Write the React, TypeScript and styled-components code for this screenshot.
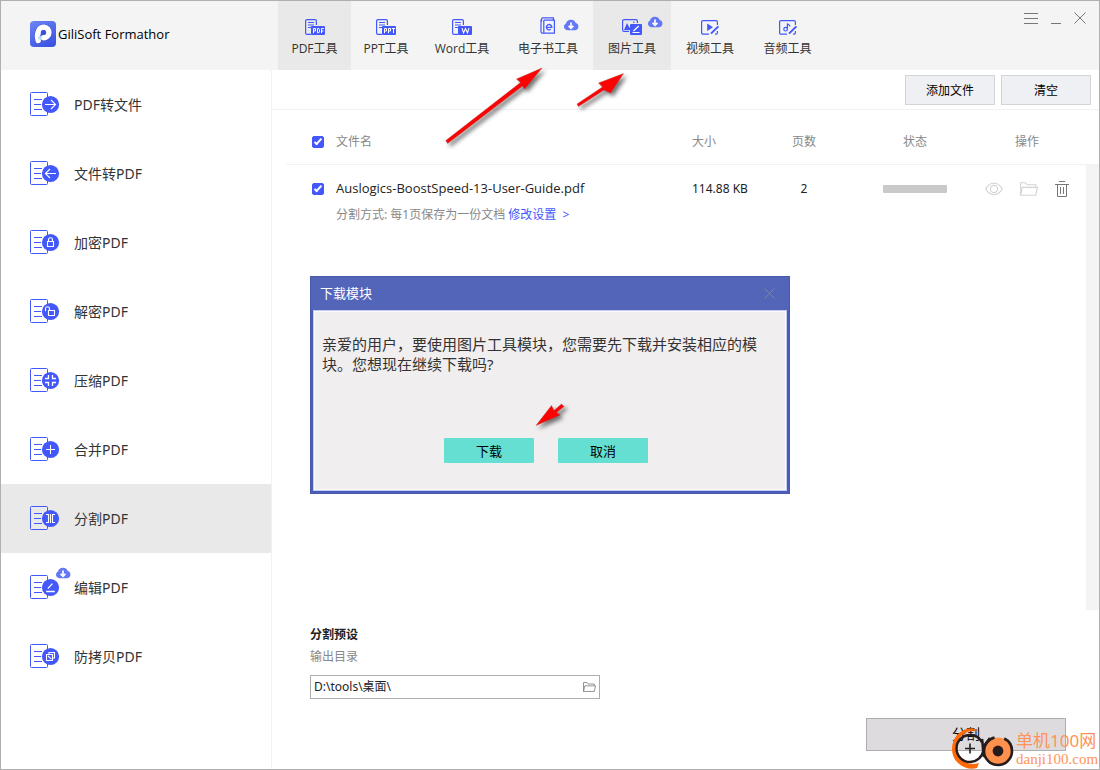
import React from "react";
import styled, { createGlobalStyle, css } from "styled-components";

const BLUE = "#4358fa";
const FONT = `"Noto Sans", "Noto Sans CJK SC", sans-serif`;
const LATIN = `"Open Sans", "Noto Sans CJK SC", sans-serif`;

const GlobalStyle = createGlobalStyle`
  *, *::before, *::after { box-sizing: border-box; }
  body { margin: 0; background: #fff; font-family: ${FONT}; font-size: 12px; color: #222; }
  button, input { font: inherit; color: inherit; }
  button { padding: 0; border: 0; background: none; cursor: pointer; }
  svg { display: block; }
`;

const Window = styled.div`
  position: relative;
  display: flex;
  flex-direction: column;
  min-height: 100vh;
  border: 1px solid #b0b0b0;
  overflow: hidden;
`;

/* ---------- header ---------- */

const Header = styled.header`
  display: flex;
  height: 69px;
  background: #f4f4f4;
`;

const Brand = styled.div`
  display: flex;
  align-items: center;
  gap: 2px;
  width: 277px;
  padding: 0 0 3px 29px;
  font-family: ${LATIN};
  font-size: 13px;
  color: #000;
  white-space: nowrap;
`;

const Tabs = styled.nav`
  display: flex;
  flex: 1;
`;

const Tab = styled.button<{ $width: number; $active?: boolean }>`
  display: flex;
  flex-direction: column;
  align-items: center;
  gap: 5px;
  width: ${(p) => p.$width}px;
  padding-top: 16px;
  font-family: ${LATIN};
  line-height: 18px;
  color: #333;
  white-space: nowrap;
  background: ${(p) => (p.$active ? "#e9e9e9" : "transparent")};
`;

const IconBox = styled.span`
  position: relative;
  display: block;
`;

const Badge = styled.span<{ $left: number; $top: number }>`
  position: absolute;
  left: ${(p) => p.$left}px;
  top: ${(p) => p.$top}px;
`;

const WindowControls = styled.div`
  display: flex;
  align-items: flex-start;
  gap: 13px;
  padding: 11px 13px 0 0;
`;

/* ---------- body ---------- */

const Body = styled.div`
  display: flex;
  flex: 1;
`;

const Sidebar = styled.nav`
  width: 271px;
  border-right: 1px solid #f2f2f2;
`;

const SideItem = styled.button<{ $active?: boolean }>`
  display: flex;
  align-items: center;
  gap: 14px;
  width: 100%;
  height: 69px;
  padding: 0 0 2px 29px;
  font-size: 14px;
  color: #333;
  background: ${(p) => (p.$active ? "#e9e9e9" : "transparent")};
`;

const Main = styled.main`
  display: flex;
  flex: 1;
  flex-direction: column;
  min-width: 0;
`;

const Toolbar = styled.div`
  display: flex;
  justify-content: flex-end;
  gap: 6px;
  height: 40px;
  padding: 5px 8px 0 0;
  border-bottom: 1px solid #f2f2f2;
`;

const ToolButton = styled.button`
  width: 90px;
  height: 30px;
  border: 1px solid #d2d3d6;
  background: #eff0f3;
  color: #000;
`;

const ListArea = styled.section`
  display: flex;
  flex: 1;
  align-items: stretch;
  padding-left: 14px;
`;

const FileTable = styled.table`
  flex: 1;
  align-self: flex-start;
  width: 100%;
  table-layout: fixed;
  border-collapse: separate;
  border-spacing: 0;
  white-space: nowrap;
`;

const Th = styled.th<{ $align?: string }>`
  height: 55px;
  padding: 9px 0 0;
  border-bottom: 1px solid #f2f2f2;
  font-weight: 400;
  line-height: 18px;
  text-align: ${(p) => p.$align ?? "left"};
  vertical-align: middle;
  color: #888;
`;

const Td = styled.td<{ $align?: string }>`
  height: 41px;
  padding: 6px 0 0;
  line-height: 20px;
  text-align: ${(p) => p.$align ?? "left"};
  vertical-align: middle;
`;

const NoteCell = styled.td`
  padding: 0 0 10px;
  line-height: 18px;
  vertical-align: top;
  color: #888;
`;

const FileName = styled.span`
  font-family: ${LATIN};
  font-size: 13px;
`;

const SettingsLink = styled.a`
  color: ${BLUE};
  text-decoration: none;
`;

const CheckBox = styled.input.attrs({ type: "checkbox" })`
  position: relative;
  display: block;
  appearance: none;
  width: 12px;
  height: 12px;
  margin: 0 0 0 26px;
  border-radius: 2px;
  border: 1px solid ${BLUE};
  background: #fff;

  &:checked {
    background: ${BLUE};
  }

  &:checked::after {
    content: "";
    position: absolute;
    left: 3px;
    top: 0;
    width: 4px;
    height: 8px;
    border: solid #fff;
    border-width: 0 2px 2px 0;
    transform: rotate(42deg);
  }
`;

const StatusBar = styled.span`
  display: block;
  width: 64px;
  height: 8px;
  margin: 0 auto;
  border-radius: 1px;
  background: #c9c9c9;
`;

const RowActions = styled.div`
  display: flex;
  align-items: center;
  justify-content: center;
  gap: 17px;
`;

const Rail = styled.div`
  display: flex;
  flex-direction: column;
  width: 13px;

  &::before {
    content: "";
    height: 55px;
    border-bottom: 1px solid #f2f2f2;
  }

  &::after {
    content: "";
    flex: 1;
    background: #f4f4f4;
  }
`;

const Footer = styled.footer`
  display: flex;
  align-items: flex-end;
  justify-content: space-between;
  padding: 15px 33px 18px 38px;
`;

const Preset = styled.div`
  display: flex;
  flex-direction: column;
  gap: 2px;
  align-self: flex-start;
  width: 290px;
  padding-bottom: 52px;
  line-height: 20px;
`;

const PresetTitle = styled.h2`
  margin: 0;
  font-size: 12px;
  font-weight: 700;
`;

const PresetLabel = styled.label`
  color: #888;
`;

const PathBox = styled.div`
  display: flex;
  align-items: center;
  height: 24px;
  margin-top: 6px;
  padding: 0 3px;
  border: 1px solid #adadad;
`;

const PathInput = styled.input`
  flex: 1;
  min-width: 0;
  padding: 0;
  border: 0;
  outline: 0;
  background: none;
`;

const SplitButton = styled.button`
  width: 200px;
  height: 33px;
  padding-bottom: 3px;
  border: 1px solid #adadad;
  background: #dddbdd;
  font-size: 14px;
  color: #000;
`;

/* ---------- dialog ---------- */

const Overlay = styled.div`
  position: absolute;
  inset: 0;
  display: flex;
  align-items: center;
  justify-content: center;
  pointer-events: none;
`;

const Dialog = styled.div`
  position: relative;
  display: flex;
  flex-direction: column;
  width: 480px;
  border: 1px solid #4a5aa9;
  padding: 0 2px 2px;
  background: #4a5db8;
  pointer-events: auto;
`;

const DialogTitle = styled.div`
  display: flex;
  align-items: center;
  justify-content: space-between;
  height: 33px;
  margin: 0 -2px;
  padding: 0 14px 0 9px;
  background: #5265b9;
  font-size: 13px;
  line-height: 18px;
  color: #fff;
`;

const DialogHeading = styled.span`
  padding-bottom: 2px;
`;

const DialogBody = styled.div`
  display: flex;
  flex-direction: column;
  justify-content: space-between;
  height: 181px;
  padding: 23px 26px 27px 8px;
  border: 1px solid #c3cbf2;
  background: #f1eeef;
  box-shadow: inset 0 0 0 1px #fbfaf6;
`;

const Message = styled.p`
  margin: 0;
  font-size: 15px;
  line-height: 20px;
  color: #333;
`;

const DialogButtons = styled.div`
  display: flex;
  justify-content: center;
  gap: 24px;
  padding-left: 10px;
`;

const DialogButton = styled.button`
  width: 90px;
  height: 25px;
  padding-bottom: 1px;
  border-radius: 1px;
  background: #64dfd1;
  font-size: 13px;
  color: #000;
`;

/* ---------- annotations over the window ---------- */

const arrowShadow = css`
  filter: drop-shadow(3px 3px 2px rgba(0, 0, 0, 0.55));
  overflow: visible;
  pointer-events: none;
`;

const Arrow = styled.svg<{ $x: number; $y: number }>`
  position: absolute;
  left: ${(p) => p.$x}px;
  top: ${(p) => p.$y}px;
  ${arrowShadow}
`;

const Watermark = styled.div`
  position: absolute;
  right: 1px;
  bottom: 0;
  display: flex;
  align-items: flex-end;
  color: #ff9358;
  white-space: nowrap;
  pointer-events: none;
`;

const WatermarkText = styled.div`
  display: flex;
  flex-direction: column;
  width: 82px;
  font-size: 17px;
  line-height: 19px;
`;

const WatermarkUrl = styled.span`
  font-family: "Liberation Serif", serif;
  font-size: 15px;
`;

/* ---------- drawings ---------- */

const Logo = () => (
  <svg width="26" height="26" viewBox="0 0 26 26" aria-hidden="true">
    <defs>
      <linearGradient id="logo" x1="0" y1="0" x2="0.6" y2="1">
        <stop offset="0" stopColor="#6c86f5" />
        <stop offset="1" stopColor="#3e55e4" />
      </linearGradient>
    </defs>
    <rect width="26" height="26" rx="4" fill="url(#logo)" />
    <path d="M8.4 19.8C7.6 17 7.4 13 8.4 10.6a5.3 5.3 0 1 1 5.2 6.2" fill="none" stroke="#2f43c4" strokeWidth="6.6" strokeLinecap="round" opacity="0.5" />
    <path d="M8.2 19.6C7.4 17 7.4 13 8.4 10.6a5.3 5.3 0 1 1 5.2 6.2" fill="none" stroke="#fff" strokeWidth="5.4" strokeLinecap="round" />
    <circle cx="13.4" cy="11.6" r="2.5" fill="#3c50dc" />
    <circle cx="9.8" cy="16.8" r="2" fill="#b4dcf4" opacity="0.8" />
  </svg>
);

const Cloud = () => (
  <svg width="16" height="12" viewBox="0 0 16 12" aria-hidden="true">
    <path d="M4 11.2A3.6 3.6 0 0 1 3 4.4 5.2 5.2 0 0 1 12.7 4 3.7 3.7 0 0 1 12.4 11.2Z" fill="#6477f4" />
    <path d="M8 3.5V9M5.6 6.8 8 9.2l2.4-2.4" stroke="#fff" strokeWidth="1.7" fill="none" />
  </svg>
);

const TabSvg = ({ children }: { children: React.ReactNode }) => (
  <svg width="20" height="18" viewBox="0 0 20 18" fill="none" stroke={BLUE} strokeWidth="1.2" aria-hidden="true">
    {children}
  </svg>
);

const docSheet = (
  <>
    <path d="M6 17.4H2a1.4 1.4 0 0 1-1.4-1.4V4A1.4 1.4 0 0 1 2 2.6h8A1.4 1.4 0 0 1 11.4 4v4" />
    <path d="M3 5.5h6M3 8h6M3 10.5h3" strokeWidth="1" />
    <rect x="6" y="9" width="14" height="9" rx="1" fill={BLUE} stroke="none" />
  </>
);

const pLetter = (x: number) => `M${x} 16.2V11.5h2v2.5h-2`;

const tabIcons: Record<string, React.ReactNode> = {
  pdf: (
    <TabSvg>
      {docSheet}
      <path d={`${pLetter(8.5)}M12.5 11.5v4.2h1.4l.6-.8v-2.6l-.6-.8ZM16.5 16.2v-4.7h2.3M16.5 14h2`} stroke="#fff" strokeWidth="1" />
    </TabSvg>
  ),
  ppt: (
    <TabSvg>
      {docSheet}
      <path d={`${pLetter(8.5)}${pLetter(12.5)}M15.8 11.5h3.4M17.5 11.5v4.7`} stroke="#fff" strokeWidth="1" />
    </TabSvg>
  ),
  word: (
    <TabSvg>
      {docSheet}
      <path d="M10 11.2l1.5 4.6 2-4.2 2 4.2 1.5-4.6" stroke="#fff" strokeWidth="1.1" />
    </TabSvg>
  ),
  ebook: (
    <TabSvg>
      <path d="M3.6 4.6V2A1.2 1.2 0 0 1 4.8.8H15.4V3H16.4V16.2H4.6A1.4 1.4 0 0 1 3 14.8V2.6" />
      <path d="M5.8 3.2H15.6M5.8 3.2V16" />
      <path d="M8.4 10.4h5.4a2.7 2.7 0 1 0-1 1.9" strokeWidth="1.3" />
    </TabSvg>
  ),
  image: (
    <TabSvg>
      <path d="M7 14.4H2A1.4 1.4 0 0 1 .6 13V4A1.4 1.4 0 0 1 2 2.6h12A1.4 1.4 0 0 1 15.4 4v2" />
      <path d="M2 13 5 6l2.6 5L9 8v5Z" fill={BLUE} stroke="none" />
      <circle cx="11.8" cy="5.2" r="0.8" fill={BLUE} stroke="none" />
      <rect x="8" y="7" width="12" height="11" rx="1" fill={BLUE} stroke="none" />
      <path d="M10.5 15.5h7M11.5 14l5.2-5" stroke="#fff" />
    </TabSvg>
  ),
  video: (
    <TabSvg>
      <path d="M9 17.2H3A1.4 1.4 0 0 1 1.6 15.8V5A1.4 1.4 0 0 1 3 3.6h13A1.4 1.4 0 0 1 17.4 5v3M17.4 14v1.8a1.4 1.4 0 0 1-1.4 1.4h-1" />
      <path d="M7.2 6.4 13 10.2 7.2 14Z" fill={BLUE} stroke="none" />
      <path d="M11 16.6 18.4 9.4" strokeWidth="2" />
    </TabSvg>
  ),
  audio: (
    <TabSvg>
      <path d="M9 17.2H3A1.4 1.4 0 0 1 1.6 15.8V5A1.4 1.4 0 0 1 3 3.6h13A1.4 1.4 0 0 1 17.4 5v3M17.4 14v1.8a1.4 1.4 0 0 1-1.4 1.4h-1" />
      <path d="M9.4 12V6.4c.4 1.5 2.6 1.2 2.6 3.2" />
      <circle cx="7.6" cy="12.2" r="1.8" />
      <path d="M11 16.6 18.4 9.4" strokeWidth="2" />
    </TabSvg>
  ),
};

const glyphs: Record<string, React.ReactNode> = {
  right: <path d="M15 12.5h10.5M21 8l4.6 4.5L21 17" />,
  left: <path d="M26 12.5H15.5M20 8l-4.6 4.5L20 17" />,
  lock: <path d="M17.5 11.5h6v5h-6ZM18.5 11.5V9.8a2 2 0 0 1 4 0v1.7" />,
  unlock: <path d="M18.5 11.5h6v5h-6ZM19.5 11.5V9.8a2 2 0 0 0-4 0v2.4" />,
  compress: <path d="M18.5 7v3.5H15M22.5 7v3.5H26M18.5 18v-3.5H15M22.5 18v-3.5H26" strokeWidth="1.3" />,
  plus: <path d="M16 12.5h9M20.5 8v9" />,
  split: <path d="M20.5 8v9M16 8.5h2.5v8H16M25 8.5h-2.5v8H25" />,
  edit: <path d="M16.2 16.5h8.6M17.8 13.6l4.6-5" strokeWidth="1.4" />,
  copy: <path d="M19 10V8.5h5.5V14H23M16.5 10.5h6v6h-6ZM18 12l3.4 3.2" />,
};

const SideIcon = ({ kind }: { kind: string }) => (
  <svg width="30" height="24" viewBox="0 0 30 24" fill="none" aria-hidden="true">
    <rect x="0.5" y="0.5" width="17" height="23" rx="1" stroke={BLUE} />
    <path d="M4 7.5h8M4 12.5h7M4 17.5h8" stroke={BLUE} />
    <circle cx="20.5" cy="12.5" r="8.6" fill={BLUE} />
    <g stroke="#fff" strokeWidth="1.1">{glyphs[kind]}</g>
  </svg>
);

const EyeIcon = () => (
  <svg width="18" height="14" viewBox="0 0 18 14" fill="none" stroke="#d3d3d3" strokeWidth="1.1" aria-hidden="true">
    <path d="M.7 7C5 -.6 13 -.6 17.3 7 13 14.6 5 14.6.7 7Z" />
    <circle cx="9" cy="7" r="3.6" />
  </svg>
);

const FolderIcon = ({ width, color }: { width: number; color: string }) => (
  <svg width={width} height={Math.round(width * 0.8)} viewBox="0 0 18 14" fill="none" stroke={color} strokeWidth="1.1" aria-hidden="true">
    <path d="M.6 13.2V.8h5l1.6 2h8.6v2.4M.6 13.2 2.4 5.4h15l-1.6 7.8Z" />
  </svg>
);

const TrashIcon = () => (
  <svg width="14" height="16" viewBox="0 0 14 16" fill="none" stroke="#777" aria-hidden="true">
    <path d="M4 .5h6M0 3.5h14M2.5 3.5v12h9v-12M5.5 6v7M8.5 6v7" />
  </svg>
);

const tabs = [
  { icon: "pdf", label: "PDF工具", width: 73, active: true },
  { icon: "ppt", label: "PPT工具", width: 70 },
  { icon: "word", label: "Word工具", width: 82 },
  { icon: "ebook", label: "电子书工具", width: 90, cloud: { left: 25, top: 2 } },
  { icon: "image", label: "图片工具", width: 78, active: true, cloud: { left: 25, top: -1 } },
  { icon: "video", label: "视频工具", width: 78 },
  { icon: "audio", label: "音频工具", width: 77 },
];

const sideItems = [
  { icon: "right", label: "PDF转文件" },
  { icon: "left", label: "文件转PDF" },
  { icon: "lock", label: "加密PDF" },
  { icon: "unlock", label: "解密PDF" },
  { icon: "compress", label: "压缩PDF" },
  { icon: "plus", label: "合并PDF" },
  { icon: "split", label: "分割PDF", active: true },
  { icon: "edit", label: "编辑PDF", cloud: true },
  { icon: "copy", label: "防拷贝PDF" },
];

export default function App() {
  return (
    <Window>
      <GlobalStyle />
      <Header>
        <Brand>
          <Logo />
          GiliSoft Formathor
        </Brand>
        <Tabs>
          {tabs.map((t) => (
            <Tab key={t.icon} type="button" $width={t.width} $active={t.active}>
              <IconBox>
                {tabIcons[t.icon]}
                {t.cloud && (
                  <Badge $left={t.cloud.left} $top={t.cloud.top}>
                    <Cloud />
                  </Badge>
                )}
              </IconBox>
              {t.label}
            </Tab>
          ))}
        </Tabs>
        <WindowControls>
          <button type="button" aria-label="菜单">
            <svg width="14" height="13" viewBox="0 0 14 13" stroke="#777" aria-hidden="true">
              <path d="M0 1.5h14M0 6.5h14M0 11.5h14" />
            </svg>
          </button>
          <button type="button" aria-label="最小化">
            <svg width="10" height="13" viewBox="0 0 10 13" stroke="#777" aria-hidden="true">
              <path d="M0 11.5h10" />
            </svg>
          </button>
          <button type="button" aria-label="关闭">
            <svg width="12" height="12" viewBox="0 0 12 12" stroke="#777" aria-hidden="true">
              <path d="M.5 .5l11 11M11.5 .5l-11 11" />
            </svg>
          </button>
        </WindowControls>
      </Header>

      <Body>
        <Sidebar>
          {sideItems.map((s) => (
            <SideItem key={s.icon} type="button" $active={s.active}>
              <IconBox>
                <SideIcon kind={s.icon} />
                {s.cloud && (
                  <Badge $left={25} $top={-8}>
                    <Cloud />
                  </Badge>
                )}
              </IconBox>
              {s.label}
            </SideItem>
          ))}
        </Sidebar>

        <Main>
          <Toolbar>
            <ToolButton type="button">添加文件</ToolButton>
            <ToolButton type="button">清空</ToolButton>
          </Toolbar>

          <ListArea>
            <FileTable>
              <colgroup>
                <col style={{ width: 50 }} />
                <col />
                <col style={{ width: 60 }} />
                <col style={{ width: 104 }} />
                <col style={{ width: 118 }} />
                <col style={{ width: 106 }} />
                <col style={{ width: 6 }} />
              </colgroup>
              <thead>
                <tr>
                  <Th>
                    <CheckBox aria-label="全选" defaultChecked />
                  </Th>
                  <Th>文件名</Th>
                  <Th>大小</Th>
                  <Th $align="center">页数</Th>
                  <Th $align="center">状态</Th>
                  <Th $align="center">操作</Th>
                  <Th />
                </tr>
              </thead>
              <tbody>
                <tr>
                  <Td>
                    <CheckBox aria-label="Auslogics-BoostSpeed-13-User-Guide.pdf" defaultChecked />
                  </Td>
                  <Td>
                    <FileName>Auslogics-BoostSpeed-13-User-Guide.pdf</FileName>
                  </Td>
                  <Td>114.88 KB</Td>
                  <Td $align="center">2</Td>
                  <Td $align="center">
                    <StatusBar />
                  </Td>
                  <Td>
                    <RowActions>
                      <button type="button" aria-label="预览">
                        <EyeIcon />
                      </button>
                      <button type="button" aria-label="打开文件夹">
                        <FolderIcon width={18} color="#d3d3d3" />
                      </button>
                      <button type="button" aria-label="删除">
                        <TrashIcon />
                      </button>
                    </RowActions>
                  </Td>
                  <Td />
                </tr>
                <tr>
                  <td />
                  <NoteCell colSpan={6}>
                    分割方式: 每1页保存为一份文档 <SettingsLink href="#settings">修改设置 &nbsp;&gt;</SettingsLink>
                  </NoteCell>
                </tr>
              </tbody>
            </FileTable>
            <Rail />
          </ListArea>

          <Footer>
            <Preset>
              <PresetTitle>分割预设</PresetTitle>
              <PresetLabel htmlFor="output">输出目录</PresetLabel>
              <PathBox>
                <PathInput id="output" type="text" defaultValue={"D:\\tools\\桌面\\"} />
                <button type="button" aria-label="浏览">
                  <FolderIcon width={13} color="#777" />
                </button>
              </PathBox>
            </Preset>
            <SplitButton type="button">分割</SplitButton>
          </Footer>
        </Main>
      </Body>

      <Overlay>
        <Dialog role="dialog" aria-label="下载模块">
          <DialogTitle>
            <DialogHeading>下载模块</DialogHeading>
            <button type="button" aria-label="关闭">
              <svg width="11" height="11" viewBox="0 0 11 11" stroke="#7d86a8" aria-hidden="true">
                <path d="M.5 .5l10 10M10.5 .5l-10 10" />
              </svg>
            </button>
          </DialogTitle>
          <DialogBody>
            <Message>亲爱的用户，要使用图片工具模块，您需要先下载并安装相应的模块。您想现在继续下载吗?</Message>
            <DialogButtons>
              <DialogButton type="button">下载</DialogButton>
              <DialogButton type="button">取消</DialogButton>
            </DialogButtons>
          </DialogBody>
          <Arrow $x={225} $y={127} width="28" height="22" viewBox="0 0 28 22" aria-hidden="true">
            <path d="M0 21.5 15.5 1.5 18 6.5 25.5 0 28 2.5 20.5 8.5 24 11Z" fill="#fd0404" stroke="#b33" strokeWidth="0.4" />
          </Arrow>
        </Dialog>
      </Overlay>

      <Arrow $x={444} $y={66} width="98" height="76" viewBox="0 0 98 76" aria-hidden="true">
        <path d="M97 1 71.5 12 75.5 15.5 .8 73.5 2.6 76.4 77.5 19 79.5 22Z" fill="#fd0404" stroke="#b33" strokeWidth="0.4" />
      </Arrow>
      <Arrow $x={576} $y={72} width="47" height="33" viewBox="0 0 47 33" aria-hidden="true">
        <path d="M46.5 .6 21.5 10 25.5 14 0 31 1.4 33.4 27 17 33.5 20Z" fill="#fd0404" stroke="#b33" strokeWidth="0.4" />
      </Arrow>

      <Watermark>
        <svg width="66" height="44" viewBox="0 0 66 44" fill="none" aria-hidden="true">
          <path d="M28 6C24 1 14 3 8 9 0 17 0 31 8 38c5 5 13 7 19 5l2-5c-7 2-13 1-17-4C5 26 6 16 12 10c5-4 10-5 16-4Z" fill="#ff6a08" />
          <circle cx="20" cy="23.5" r="13.5" stroke="#261c1c" strokeWidth="2.4" strokeDasharray="76 9" strokeDashoffset="-2" />
          <path d="M20 18.500v10M15 23.500h10" stroke="#261c1c" strokeWidth="1.6" />
          <circle cx="48" cy="26" r="13.600" fill="#ff914d" />
          <circle cx="48" cy="26" r="14" stroke="#261c1c" strokeWidth="2.6" strokeDasharray="78 10" strokeDashoffset="-72" />
          <path d="M32 14c1 6 1 14 2 18M40 13l-6 8" stroke="#261c1c" strokeWidth="2.6" />
          <circle cx="48" cy="26" r="5.4" fill="#261c1c" />
        </svg>
        <WatermarkText>
          <span>单机100网</span>
          <WatermarkUrl>danji100.com</WatermarkUrl>
        </WatermarkText>
      </Watermark>
    </Window>
  );
}
